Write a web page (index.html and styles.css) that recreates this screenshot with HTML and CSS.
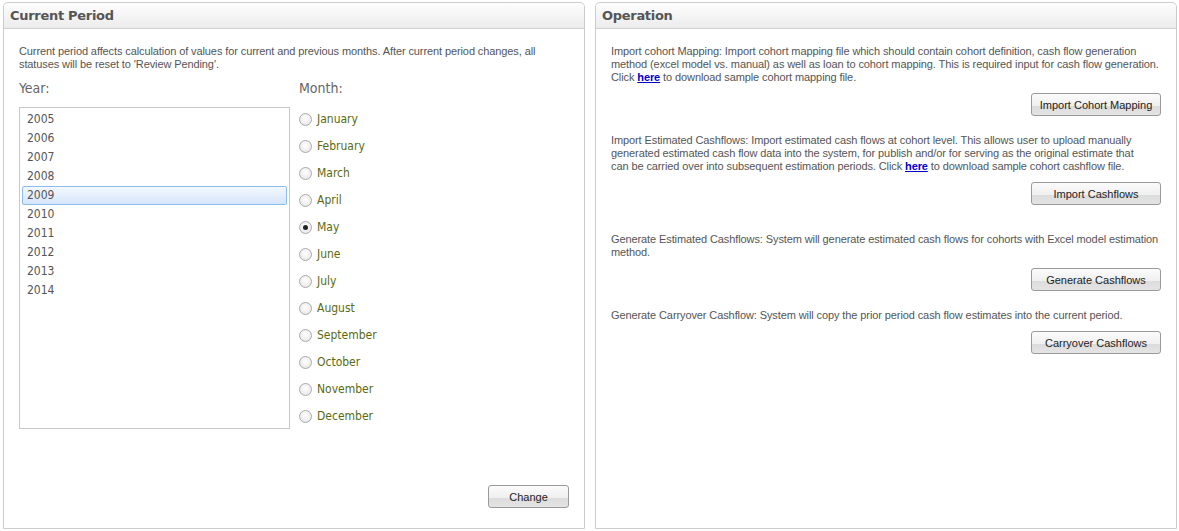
FILE: index.html
```html
<!DOCTYPE html>
<html>
<head>
<meta charset="utf-8">
<link rel="stylesheet" href="styles.css">
</head>
<body>
<div class="page">
  <section class="panel panel-left">
    <div class="panel-head">Current Period</div>
    <div class="panel-body">
      <p class="intro">Current period affects calculation of values for current and previous months. After current period changes, all statuses will be reset to 'Review Pending'.</p>
      <div class="period">
        <div class="year-col">
          <div class="label">Year:</div>
          <ul class="listbox">
            <li>2005</li>
            <li>2006</li>
            <li>2007</li>
            <li>2008</li>
            <li class="selected">2009</li>
            <li>2010</li>
            <li>2011</li>
            <li>2012</li>
            <li>2013</li>
            <li>2014</li>
          </ul>
        </div>
        <div class="month-col">
          <div class="label">Month:</div>
          <ul class="months">
            <li><span class="radio"></span>January</li>
            <li><span class="radio"></span>February</li>
            <li><span class="radio"></span>March</li>
            <li><span class="radio"></span>April</li>
            <li><span class="radio checked"></span>May</li>
            <li><span class="radio"></span>June</li>
            <li><span class="radio"></span>July</li>
            <li><span class="radio"></span>August</li>
            <li><span class="radio"></span>September</li>
            <li><span class="radio"></span>October</li>
            <li><span class="radio"></span>November</li>
            <li><span class="radio"></span>December</li>
          </ul>
        </div>
      </div>
      <div class="actions">
        <button class="btn btn-change">Change</button>
      </div>
    </div>
  </section>
  <section class="panel panel-right">
    <div class="panel-head">Operation</div>
    <div class="panel-body ops">
      <div class="op op1">
        <p>Import cohort Mapping: Import cohort mapping file which should contain cohort definition, cash flow generation method (excel model vs. manual) as well as loan to cohort mapping. This is required input for cash flow generation. Click <a href="#">here</a> to download sample cohort mapping file.</p>
        <div class="op-btn"><button class="btn">Import Cohort Mapping</button></div>
      </div>
      <div class="op op2">
        <p>Import Estimated Cashflows: Import estimated cash flows at cohort level. This allows user to upload manually generated estimated cash flow data into the system, for publish and/or for serving as the original estimate that can be carried over into subsequent estimation periods. Click <a href="#">here</a> to download sample cohort cashflow file.</p>
        <div class="op-btn"><button class="btn">Import Cashflows</button></div>
      </div>
      <div class="op op3">
        <p>Generate Estimated Cashflows: System will generate estimated cash flows for cohorts with Excel model estimation method.</p>
        <div class="op-btn"><button class="btn">Generate Cashflows</button></div>
      </div>
      <div class="op op4">
        <p>Generate Carryover Cashflow: System will copy the prior period cash flow estimates into the current period.</p>
        <div class="op-btn"><button class="btn">Carryover Cashflows</button></div>
      </div>
    </div>
  </section>
</div>
</body>
</html>
```

FILE: styles.css
```css
* { box-sizing: border-box; }
html, body { margin: 0; padding: 0; background: #fff; }
body {
  font-family: "DejaVu Sans Condensed", "Liberation Sans", sans-serif;
  font-size: 11px;
  color: #555;
}
.page {
  display: flex;
  gap: 10px;
  padding: 2px 2px 0 3px;
  height: 529px;
}
.panel {
  border: 1px solid #ccc;
  border-radius: 5px 5px 0 0;
  display: flex;
  flex-direction: column;
  height: 527px;
}
.panel-left { width: 582px; }
.panel-right { width: 582px; }
.panel-head {
  height: 26px;
  border-bottom: 1px solid #d0d0d0;
  background: linear-gradient(#fdfdfd, #ececec);
  border-radius: 5px 5px 0 0;
  font-family: "DejaVu Sans", sans-serif;
  font-weight: bold;
  font-size: 13px;
  color: #555;
  padding: 5px 0 0 6px;
  letter-spacing: -0.3px;
}
.panel-body {
  flex: 1;
  display: flex;
  flex-direction: column;
  padding: 16px 15px 20px 15px;
}
p {
  margin: 0;
  line-height: 13px;
  font-family: "Liberation Sans", sans-serif;
  font-size: 11px;
  letter-spacing: -0.1px;
}
.intro { margin-bottom: 9px; }
.period { display: flex; }
.year-col { width: 280px; }
.label {
  font-size: 14px;
  color: #666;
  height: 27px;
  line-height: 16px;
}
.listbox {
  list-style: none;
  margin: 0;
  padding: 2px 2px;
  width: 271px;
  height: 322px;
  border: 1px solid #c8c8c8;
  font-size: 12px;
  color: #555;
}
.listbox li {
  height: 19px;
  line-height: 17px;
  padding-left: 4px;
  border: 1px solid transparent;
}
.listbox li.selected {
  border-color: #8cbcec;
  border-radius: 2px;
  background: linear-gradient(#f4f8fe, #d5e5fb);
}
.months {
  list-style: none;
  margin: 0;
  padding: 4px 0 0 0;
  font-size: 12px;
  color: #5a6a10;
}
.months li {
  height: 27px;
  line-height: 16px;
  display: flex;
  align-items: flex-start;
}
.radio {
  width: 13px;
  height: 13px;
  border: 1px solid #aaa;
  border-radius: 50%;
  background: radial-gradient(circle at 50% 40%, #fff, #e2e2e2);
  margin: 2px 5px 0 0;
  flex: none;
  position: relative;
}
.radio.checked::after {
  content: "";
  position: absolute;
  left: 3px; top: 3px;
  width: 5px; height: 5px;
  border-radius: 50%;
  background: #222;
}
.actions {
  margin-top: auto;
  display: flex;
  justify-content: flex-end;
}
.btn {
  font-family: "Liberation Sans", "DejaVu Sans Condensed", sans-serif;
  font-size: 11px;
  color: #222;
  height: 23px;
  padding: 0 6px;
  border: 1px solid #9a9a9a;
  border-radius: 3px;
  background: linear-gradient(#fbfbfb 0%, #f0f0f0 55%, #dcdcdc 56%, #e4e4e4 100%);
}
.btn-change { width: 81px; }
.ops { padding-top: 16px; }
.op-btn {
  display: flex;
  justify-content: flex-end;
  margin-top: 9px;
}
.op-btn .btn { width: 130px; }
.op2 { margin-top: 18px; }
.op2 p { max-width: 536px; }
.op3 { margin-top: 28px; }
.op4 { margin-top: 18px; }
a { color: #0000cc; font-weight: bold; }
```
